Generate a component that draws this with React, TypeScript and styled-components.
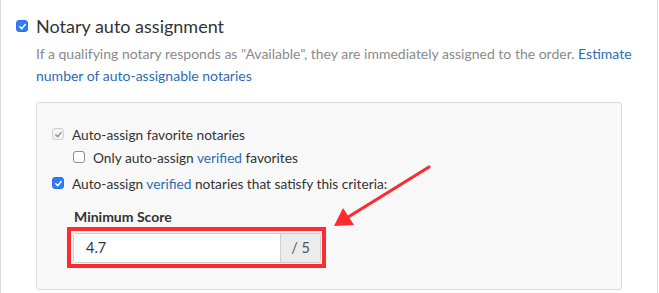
import React from "react";
import styled, { createGlobalStyle } from "styled-components";

const Global = createGlobalStyle`
  html, body { margin: 0; padding: 0; background: #fff; }
  body { font-family: "Lato", "Open Sans", "Liberation Sans", sans-serif; color: #333; }
  * { box-sizing: border-box; }
`;

const Page = styled.div`
  width: 658px;
  height: 293px;
  border-left: 1px solid #dcdcdc;
  border-right: 1px solid #dcdcdc;
  padding: 13px 0 0 15px;
  overflow: hidden;
`;

const HeaderRow = styled.div`
  display: flex;
  align-items: center;
  gap: 8px;
  height: 26px;
`;

const Heading = styled.h3`
  margin: 0;
  font-size: 18px;
  font-weight: 400;
  color: #333;
  line-height: 26px;
`;

const Section = styled.div`
  padding-left: 20px;
`;

const Description = styled.p`
  margin: 4px 0 0;
  font-size: 14px;
  line-height: 22px;
  color: #8a8a8a;
  width: 600px;
`;

const Link = styled.a`
  color: #2b6cb0;
  text-decoration: none;
`;

const Panel = styled.div`
  margin-top: 15px;
  width: 586px;
  height: 188px;
  background: #f8f8f8;
  border: 1px solid #dadada;
  border-radius: 3px;
  padding: 20px 0 0 15px;
`;

const CheckRow = styled.label<{ $indent?: boolean; $gap?: number }>`
  display: flex;
  align-items: center;
  gap: 8px;
  height: 22px;
  margin-left: ${(p) => (p.$indent ? "21px" : "0")};
  margin-top: ${(p) => p.$gap ?? 0}px;
  font-size: 13.7px;
  color: #333;
`;

const Box = styled.span<{ $variant: "blue" | "disabled" | "empty" }>`
  flex: 0 0 auto;
  width: 12px;
  height: 12px;
  border-radius: 3px;
  display: inline-flex;
  align-items: center;
  justify-content: center;
  background: ${(p) =>
    p.$variant === "blue" ? "#2f7df6" : p.$variant === "disabled" ? "#f3f3f3" : "#fff"};
  border: 1px solid
    ${(p) =>
      p.$variant === "blue" ? "#2a72e6" : p.$variant === "disabled" ? "#cfcfcf" : "#8d8d8d"};
`;

const Check: React.FC<{ variant: "blue" | "disabled" | "empty" }> = ({ variant }) => (
  <Box $variant={variant}>
    {variant !== "empty" && (
      <svg width="9" height="9" viewBox="0 0 10 10">
        <path
          d="M2 5.3 L4.1 7.4 L8 2.8"
          fill="none"
          stroke={variant === "blue" ? "#fff" : "#9a9a9a"}
          strokeWidth="1.7"
          strokeLinecap="round"
          strokeLinejoin="round"
        />
      </svg>
    )}
  </Box>
);

const Field = styled.div`
  margin: 14px 0 0 21px;
`;

const FieldLabel = styled.div`
  font-size: 14px;
  font-weight: 700;
  color: #333;
  line-height: 18px;
  margin-left: 1px;
`;

const InputWrap = styled.div`
  position: relative;
  margin-top: 7px;
  width: 248px;
`;

const InputGroup = styled.div`
  display: flex;
  height: 30px;
  border: 1px solid #cfcfcf;
  border-radius: 3px;
  overflow: hidden;
`;

const Input = styled.div`
  flex: 1;
  background: #fff;
  padding-left: 12px;
  font-size: 14.5px;
  line-height: 28px;
  color: #333;
`;

const Addon = styled.div`
  width: 40px;
  background: #ececec;
  border-left: 1px solid #cfcfcf;
  font-size: 14.5px;
  line-height: 28px;
  text-align: center;
  color: #555;
`;

const Highlight = styled.div`
  position: absolute;
  left: -6px;
  top: -6px;
  right: -5px;
  bottom: -5px;
  border: 4px solid #ff2a2e;
  pointer-events: none;
`;

const ArrowSvg = styled.svg`
  position: absolute;
  left: 255px;
  top: -72px;
  overflow: visible;
  pointer-events: none;
`;

export default function App() {
  return (
    <>
      <Global />
      <Page>
        <HeaderRow>
          <Check variant="blue" />
          <Heading>Notary auto assignment</Heading>
        </HeaderRow>
        <Section>
          <Description>
            If a qualifying notary responds as "Available", they are immediately assigned to the
            order. <Link>Estimate number of auto-assignable notaries</Link>
          </Description>
          <Panel>
            <CheckRow>
              <Check variant="disabled" />
              Auto-assign favorite notaries
            </CheckRow>
            <CheckRow $indent $gap={1}>
              <Check variant="empty" />
              <span>
                Only auto-assign <Link>verified</Link> favorites
              </span>
            </CheckRow>
            <CheckRow $gap={4}>
              <Check variant="blue" />
              <span>
                Auto-assign <Link>verified</Link> notaries that satisfy this criteria:
              </span>
            </CheckRow>
            <Field>
              <FieldLabel>Minimum Score</FieldLabel>
              <InputWrap>
                <InputGroup>
                  <Input>4.7</Input>
                  <Addon>/ 5</Addon>
                </InputGroup>
                <Highlight />
                <ArrowSvg width="110" height="75" viewBox="255 -72 110 75">
                  <line x1="356" y1="-66" x2="272" y2="-14" stroke="#ff2a2e" strokeWidth="3.2" strokeLinecap="round" />
                  <polygon points="261,-7 281,-8 270,-25" fill="#ff2a2e" />
                </ArrowSvg>
              </InputWrap>
            </Field>
          </Panel>
        </Section>
      </Page>
    </>
  );
}
